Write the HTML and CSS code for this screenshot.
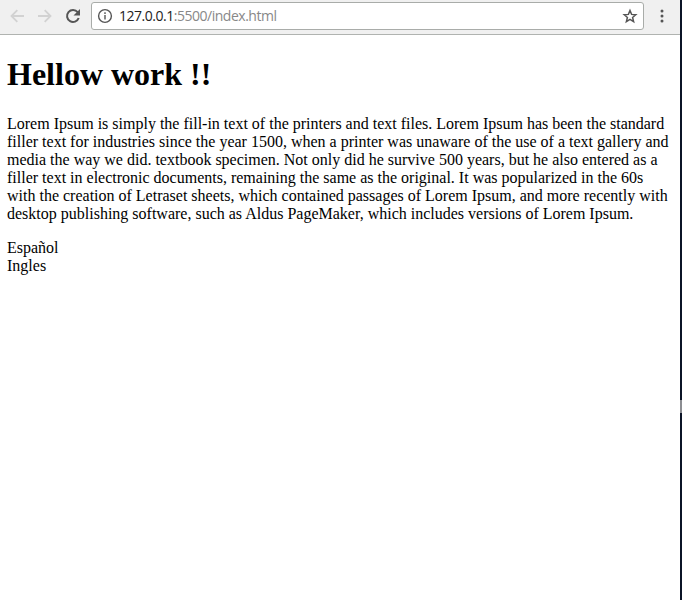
FILE: index.html
```
<!DOCTYPE html>
<html lang="en">
<head>
<meta charset="utf-8">
<title>Hellow work</title>
<link rel="stylesheet" href="styles.css">
</head>
<body>
<div class="window">
  <header class="toolbar">
    <svg class="nav" width="18" height="18" viewBox="0 0 18 18"><path class="arrow" d="M16 9H3.8M9.3 3.2L3.5 9l5.8 5.8"/></svg>
    <svg class="nav forward" width="18" height="18" viewBox="0 0 18 18"><path class="arrow" d="M2 9h12.2M8.7 3.2L14.500 9l-5.800 5.800"/></svg>
    <svg class="reload" width="18" height="18" viewBox="0 0 18 18"><path class="ring" d="M13.7 5.2A6 6 0 1 0 14.7 11"/><path class="tip" d="M16 2v6.500H9.500z"/></svg>
    <div class="address">
      <svg class="info" width="16" height="16" viewBox="0 0 16 16"><circle cx="8" cy="8" r="6.400"/><path d="M8 7v4.500M8 4.300v1.600"/></svg>
      <span class="url">127.0.0.1<span class="path">:5500/index.html</span></span>
      <svg class="star" width="16" height="16" viewBox="0 0 16 16"><path d="M8 2.500l1.600 3.900 4.200.3-3.200 2.800 1 4.100L8 11.400l-3.600 2.200 1-4.100-3.200-2.800 4.200-.3z"/></svg>
    </div>
    <svg class="menu" width="4" height="16" viewBox="0 0 4 16"><circle cx="2" cy="3" r="1.500"/><circle cx="2" cy="8" r="1.500"/><circle cx="2" cy="13" r="1.500"/></svg>
  </header>
  <main class="page">
    <h1>Hellow work !!</h1>
    <p>Lorem Ipsum is simply the fill-in text of the printers and text files. Lorem Ipsum has been the standard<br>
    filler text for industries since the year 1500, when a printer was unaware of the use of a text gallery and<br>
    media the way we did. textbook specimen. Not only did he survive 500 years, but he also entered as a<br>
    filler text in electronic documents, remaining the same as the original. It was popularized in the 60s<br>
    with the creation of Letraset sheets, which contained passages of Lorem Ipsum, and more recently with<br>
    desktop publishing software, such as Aldus PageMaker, which includes versions of Lorem Ipsum.</p>
    <div>Español</div>
    <div>Ingles</div>
  </main>
</div>
<div class="edge"><div class="edge-mark"></div></div>
</body>
</html>
```
FILE: styles.css
```
* { box-sizing: border-box; }
body {
  margin: 0;
  height: 600px;
  display: flex;
  overflow: hidden;
  background: #fff;
}
.window { flex: 1; min-width: 0; }
.edge { width: 2px; background: #0b1426; padding-top: 400px; }
.edge-mark { height: 13px; background: #8b8d92; }
.toolbar {
  height: 35px;
  padding: 2px 0 5px 8px;
  display: flex;
  align-items: center;
  background: #f0f0f0;
  border-bottom: 1px solid #b0b3b0;
}
.toolbar svg { flex: none; fill: none; }
.forward { margin-left: 10px; }
.arrow { stroke: #d2d2d2; stroke-width: 1.8; }
.reload { margin-left: 10px; }
.ring { stroke: #555; stroke-width: 2; }
.toolbar .tip { fill: #555; }
.address {
  width: 553px;
  height: 28px;
  margin-left: 9px;
  padding: 0 5px;
  display: flex;
  align-items: center;
  background: #fff;
  border: 1px solid #a9aca9;
  border-radius: 3px;
}
.info { stroke: #555; stroke-width: 1.4; }
.url {
  flex: 1;
  margin-left: 6px;
  font: 14px/18px "Open Sans", "Noto Sans", sans-serif;
  letter-spacing: -0.48px;
  color: #222;
  white-space: nowrap;
}
.path { color: #888; }
.star { stroke: #555; stroke-width: 1.5; }
.menu { margin-left: 16px; }
.menu circle { fill: #555; }
.page {
  padding: 21px 0 0 7px;
  font: 16px/18px "Liberation Serif", "Times New Roman", serif;
  color: #000;
  white-space: nowrap;
}
h1 { margin: 0 0 22px; font-size: 32px; line-height: 37px; }
p { margin: 0 0 16px; }
```
